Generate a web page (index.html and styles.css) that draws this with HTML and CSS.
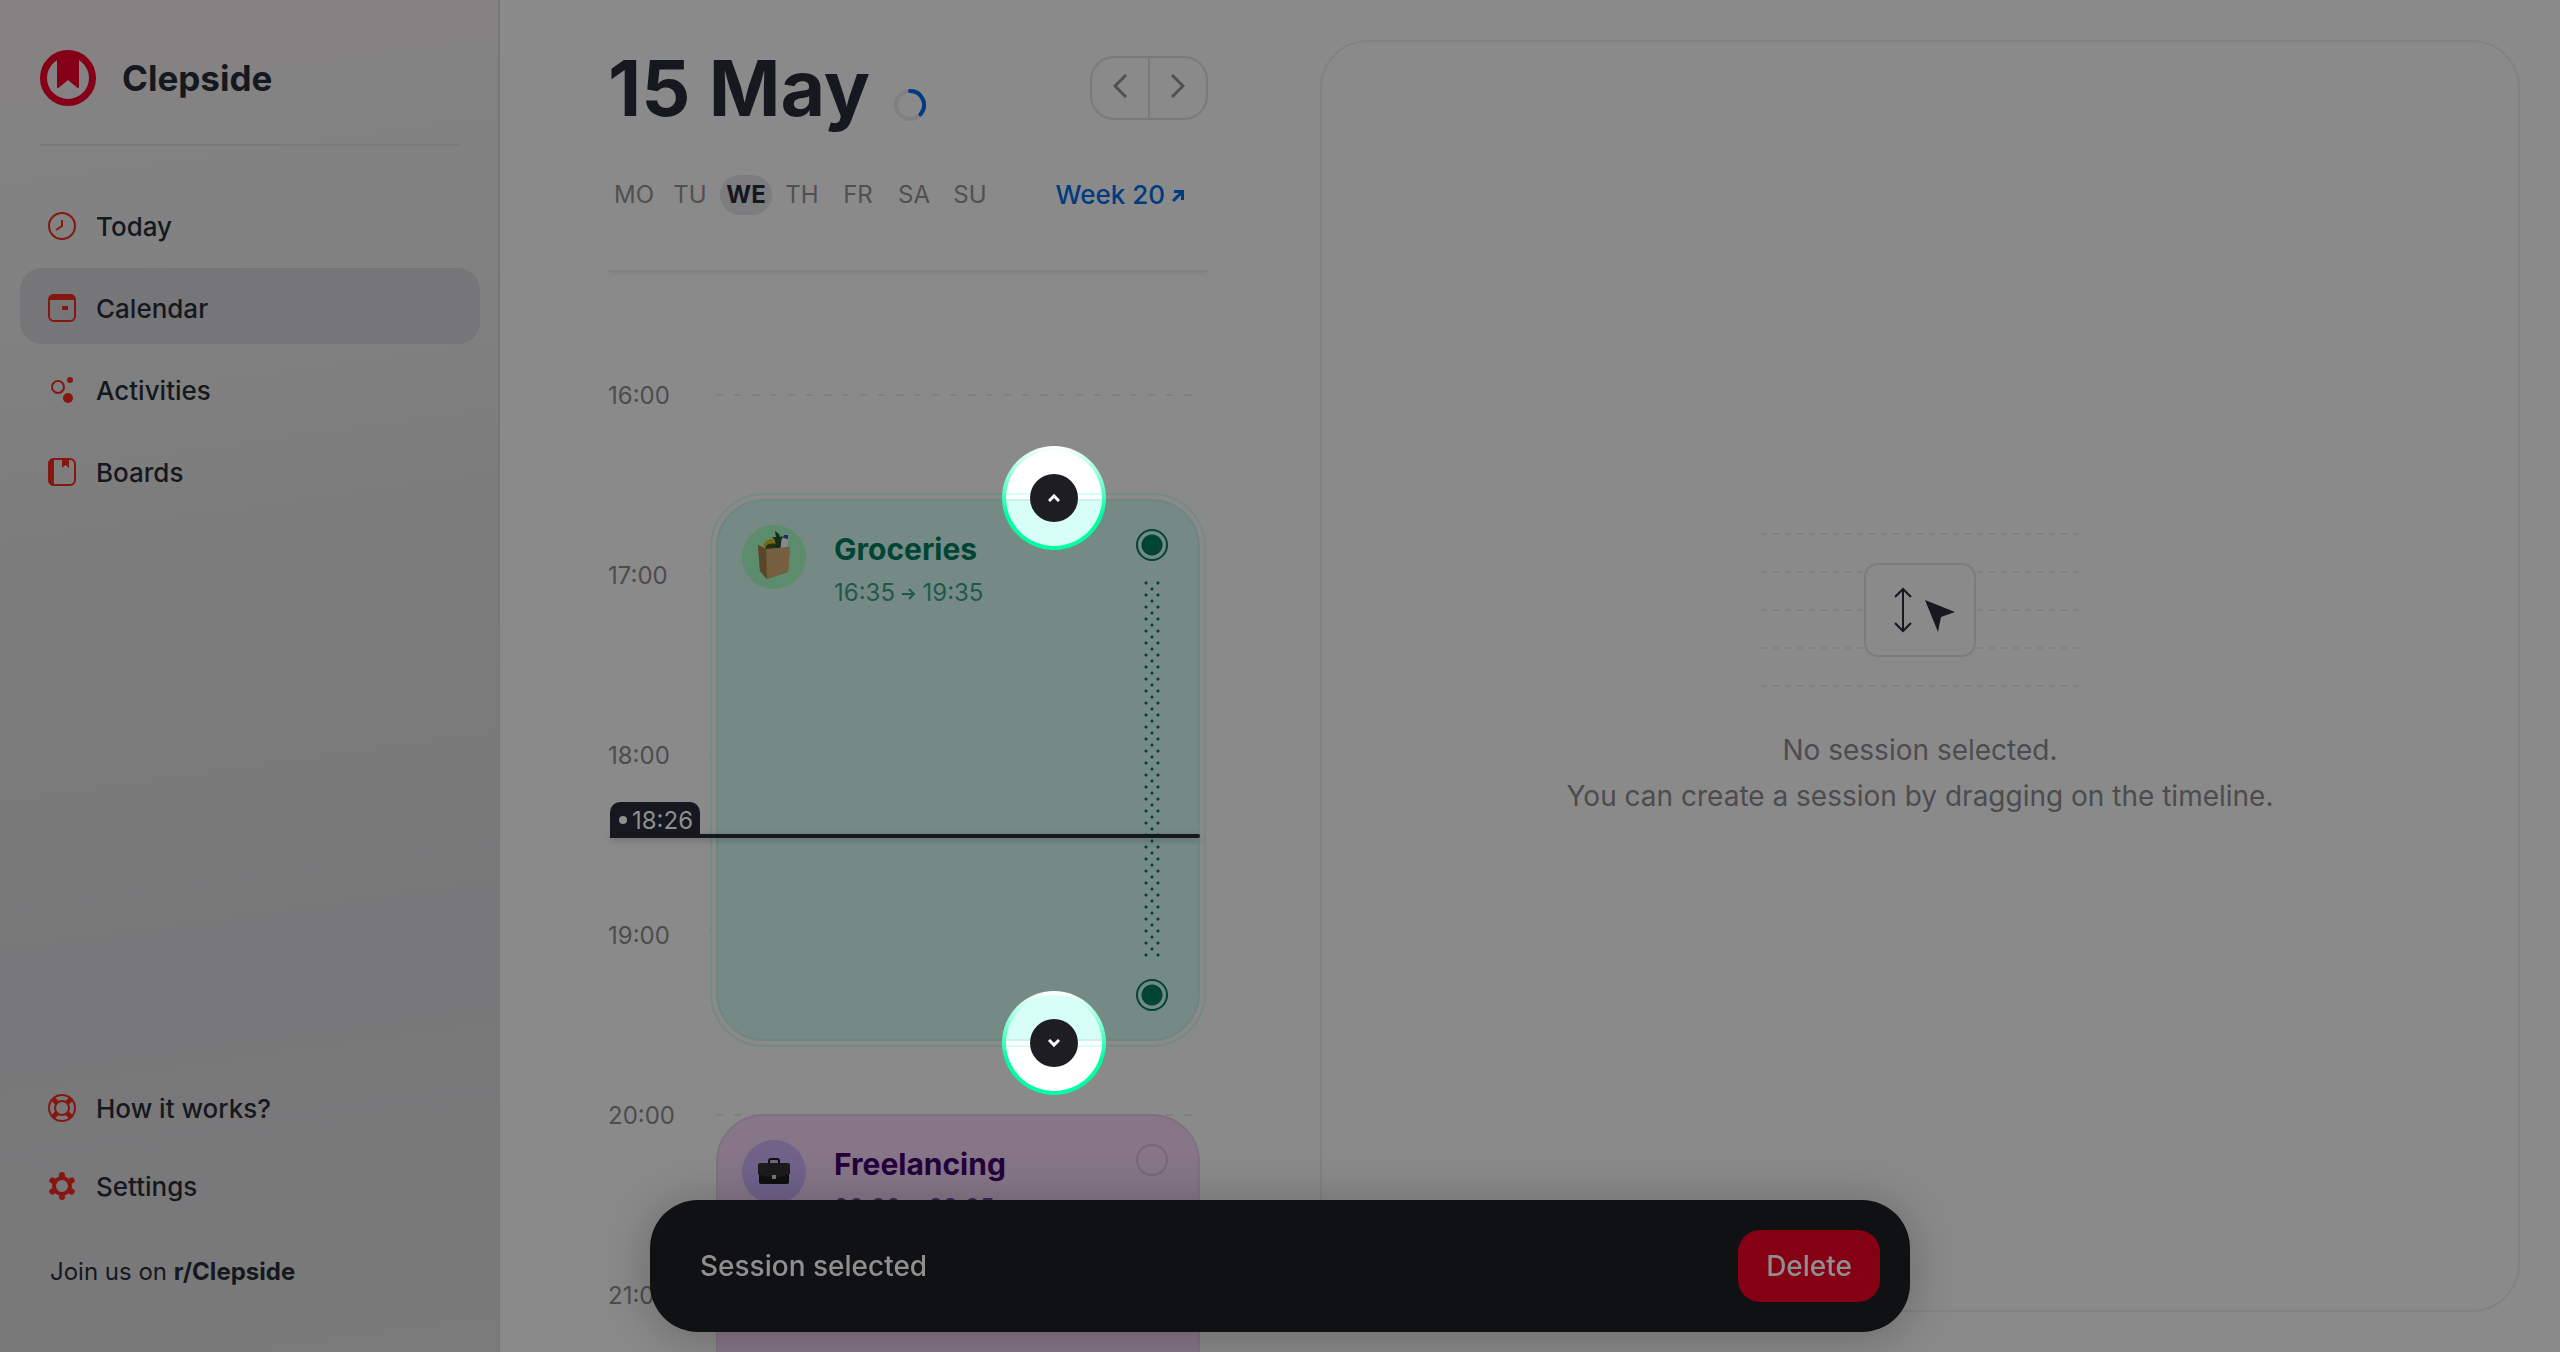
FILE: index.html
```html
<!DOCTYPE html>
<html lang="en">
<head>
<meta charset="utf-8">
<title>Clepside</title>
<link rel="stylesheet" href="styles.css">
</head>
<body>
<div class="app">

<aside class="sidebar">
	<a class="brand" href="#">
		<svg class="logo" viewBox="0 0 56 56"><circle cx="28" cy="28" r="24.5" fill="none" stroke="#850017" stroke-width="7"/><path d="M17 3h22v33.500q0 2.500-2 1l-9-7.500-9 7.500q-2 1.500-2-1z" fill="#850017"/></svg>
		<span>Clepside</span>
	</a>
	<nav class="menu">
		<a class="item" href="#">
			<svg class="icon" viewBox="0 0 28 28"><circle cx="14" cy="14" r="13"/><path d="M14 8v6l-6 4"/></svg>
			Today
		</a>
		<a class="item active" href="#">
			<svg class="icon" viewBox="0 0 28 28"><rect x="1" y="1" width="26" height="26" rx="5"/><path class="solid" d="M0 6a6 6 0 0 1 6-6h16a6 6 0 0 1 6 6zM14 12h6v4h-6z"/></svg>
			Calendar
		</a>
		<a class="item" href="#">
			<svg class="icon" viewBox="0 0 28 28"><circle cx="10" cy="11" r="6"/><circle class="solid" cx="22" cy="4" r="3"/><circle class="solid" cx="20" cy="22" r="5"/></svg>
			Activities
		</a>
		<a class="item" href="#">
			<svg class="icon" viewBox="0 0 28 28"><rect x="1" y="1" width="26" height="26" rx="5"/><path class="solid" d="M6 0v28a6 6 0 0 1-6-6V6a6 6 0 0 1 6-6zM14 1h7v9l-3.500-3-3.500 3z"/></svg>
			Boards
		</a>
	</nav>
	<nav class="menu menu-bottom">
		<a class="item" href="#">
			<svg class="icon" viewBox="0 0 28 28"><circle cx="14" cy="14" r="13"/><circle cx="14" cy="14" r="7"/><path class="thick" d="M5 5l4 4M23 5l-4 4M5 23l4-4M23 23l-4-4"/></svg>
			How it works?
		</a>
		<a class="item" href="#">
			<svg class="icon" viewBox="0 0 28 28"><circle class="cog" cx="14" cy="14" r="8"/><path class="teeth" d="M14 5V3M14 23v2M6.200 9.500l-1.900-1.100M21.800 9.500l1.900-1.100M6.200 18.500l-1.900 1.100M21.800 18.500l1.900 1.100"/></svg>
			Settings
		</a>
	</nav>
	<p class="join">Join us on <a href="#">r/Clepside</a></p>
</aside>

<section class="calendar">
	<header class="day-head">
		<h1>15 May</h1>
		<svg class="spinner" viewBox="0 0 32 32"><circle cx="16" cy="16" r="14"/><path d="M16 2a14 14 0 0 1 10.500 23.300"/></svg>
		<div class="pager">
			<button type="button" aria-label="Previous day"><svg viewBox="0 0 14 24"><path d="M13 1L2 12l11 11"/></svg></button>
			<button type="button" aria-label="Next day"><svg viewBox="0 0 14 24"><path d="M1 1l11 11L1 23"/></svg></button>
		</div>
	</header>
	<div class="week">
		<a href="#">MO</a><a href="#">TU</a><a class="current" href="#">WE</a><a href="#">TH</a><a href="#">FR</a><a href="#">SA</a><a href="#">SU</a>
		<a class="week-link" href="#">Week 20 <svg viewBox="0 0 12 12"><path d="M1 11l9-9M2 1.500h8.500V10"/></svg></a>
	</div>

	<div class="timeline">
		<div class="hour"><span>16:00</span></div>
		<div class="hour"><span>17:00</span></div>
		<div class="hour"><span>18:00</span></div>
		<div class="hour"><span>19:00</span></div>
		<div class="hour"><span>20:00</span></div>
		<div class="hour"><span>21:00</span></div>

		<!-- 3px per minute, the 16:00 line is at 16px -->
		<article class="session groceries" style="top:120px;height:542px">
			<div class="avatar">
				<svg viewBox="0 0 64 64">
					<path d="M21 22c1-6 7-10 14-7l1 9z" fill="#776b13"/>
					<path d="M24 21c3-3 8-3 11-1v5H23z" fill="#242f14"/>
					<path d="M34 24l-1-9-3-3 4 0-1-6 4 3 1 3 3-1-2 5v8z" fill="#152d17"/>
					<path d="M38 24l3-11h4l1 4-2 7z" fill="#8a8792"/>
					<path d="M41 13l1-3h4v4z" fill="#28296e"/>
					<path d="M16 20l8 4 24-2-2 25-21 7-7-8z" fill="#6f5a37"/>
					<path d="M24 24l24-2-2 25-21 7z" fill="#755f3e"/>
					<path d="M16 20l8 4 1 30-7-8z" fill="#5a4527"/>
				</svg>
			</div>
			<div class="info">
				<h2>Groceries</h2>
				<p>16:35 <svg viewBox="0 0 14 14"><path d="M0 7h12M7 2l5 5-5 5"/></svg> 19:35</p>
			</div>
			<div class="track">
				<input type="radio" aria-label="Start" name="start" checked>
				<div class="dots"></div>
				<input type="radio" aria-label="End" name="end" checked>
			</div>
			<div class="spot spot-top"><button type="button" aria-label="Extend up"><svg viewBox="0 0 12 8"><path d="M1 7l5-5 5 5"/></svg></button></div>
			<div class="spot spot-bottom"><button type="button" aria-label="Extend down"><svg viewBox="0 0 12 8"><path d="M1 1l5 5 5-5"/></svg></button></div>
		</article>

		<article class="session freelancing" style="top:735px;height:542px">
			<div class="avatar">
				<svg viewBox="0 0 64 64">
					<path d="M27 24v-3q0-2 2-2h6q2 0 2 2v3" fill="none" stroke="#111" stroke-width="2"/>
					<rect x="17" y="26" width="30" height="18" rx="2" fill="#0f0f10"/>
					<path d="M16 25q0-2 2-2h28q2 0 2 2v9q-16 7-32 0z" fill="#1b1b1c"/>
					<path d="M30 35h4v4h-4z" fill="#77777a"/>
				</svg>
			</div>
			<div class="info">
				<h2>Freelancing</h2>
				<p>20:00 <svg viewBox="0 0 14 14"><path d="M0 7h12M7 2l5 5-5 5"/></svg> 23:05</p>
			</div>
			<div class="track">
				<input type="radio" aria-label="Start" name="next">
			</div>
		</article>

		<div class="now" style="top:455px"><span>18:26</span></div>
	</div>
</section>

<main class="detail">
	<div class="panel">
		<svg class="drag-art" viewBox="0 0 318 154">
			<path class="lines" d="M0 1h318M0 39h318M0 77h318M0 115h318M0 153h318"/>
			<rect x="104" y="31" width="110" height="92" rx="13"/>
			<path class="arrow" d="M142 56v42M134 64l8-8 8 8M134 90l8 8 8-8"/>
			<path class="cursor" d="M164 67l30 12-14 5-3 15z"/>
		</svg>
		<p>No session selected.<br>You can create a session by dragging on the timeline.</p>
	</div>
</main>

</div>

<div class="toast">
	<span>Session selected</span>
	<button type="button">Delete</button>
</div>
</body>
</html>
```
FILE: styles.css
```css
* {
	box-sizing: border-box;
}
body {
	margin: 0;
	background: #8a8a8a;
	color: #15181e;
	font-family: Inter, "Liberation Sans", sans-serif;
	font-size: 26px;
	font-weight: 400;
	overflow: hidden;
}
a {
	color: inherit;
	text-decoration: none;
}
h1, h2, p {
	margin: 0;
}
button {
	border: 0;
	padding: 0;
	background: none;
	color: inherit;
	font: inherit;
}
.app {
	display: grid;
	grid-template-columns: 500px 820px 1fr;
	height: 100vh;
}

/* sidebar */
.sidebar {
	display: flex;
	flex-direction: column;
	padding: 0 18px 64px 20px;
	border-right: 2px solid #77777a;
	background: linear-gradient(172deg, #858283 0%, #828282 20%, #7c7c7c 40%, #78787a 70%, #7a7a7b 100%);
}
.brand {
	display: flex;
	align-items: center;
	gap: 26px;
	height: 146px;
	margin: 0 20px;
	padding-top: 12px;
	border-bottom: 2px solid #7a7a7d;
	font-size: 35px;
	font-weight: 700;
}
.logo {
	width: 56px;
	height: 56px;
}
.menu {
	display: flex;
	flex-direction: column;
	gap: 6px;
	padding-top: 40px;
}
.menu-bottom {
	gap: 2px;
	margin-top: auto;
	padding: 0 0 34px;
}
.item {
	display: flex;
	align-items: center;
	gap: 20px;
	height: 76px;
	padding: 4px 28px 0;
	border-radius: 22px;
	font-weight: 500;
}
.active {
	background: #767678;
}
.icon {
	width: 28px;
	height: 28px;
	fill: none;
	stroke: #861710;
	stroke-width: 2;
}
.icon .solid {
	fill: #861710;
	stroke: none;
}
.icon .thick {
	stroke-width: 5;
}
.icon .cog {
	stroke-width: 4;
}
.icon .teeth {
	stroke-width: 6;
	stroke-linecap: round;
}
.join {
	padding-left: 30px;
	font-size: 24px;
	line-height: 32px;
}
.join a {
	font-weight: 700;
}

/* calendar column */
.calendar {
	height: 100vh;
	padding: 0 112px 0 108px;
	overflow: hidden;
}
.day-head {
	display: flex;
	align-items: center;
	height: 175px;
}
.day-head h1 {
	font-size: 77px;
	font-weight: 700;
	line-height: 96px;
}
.spinner {
	width: 32px;
	height: 32px;
	margin: 34px 0 0 24px;
	fill: none;
	stroke: #808081;
	stroke-width: 4;
}
.spinner path {
	stroke: #003a80;
	stroke-linecap: round;
}
.pager {
	display: flex;
	width: 118px;
	height: 64px;
	margin-left: auto;
	border: 2px solid #7a7a7c;
	border-radius: 24px;
}
.pager button {
	flex: 1;
	padding-top: 2px;
}
.pager button + button {
	border-left: 2px solid #7a7a7c;
}
.pager svg {
	width: 14px;
	height: 24px;
	fill: none;
	stroke: #505052;
	stroke-width: 3;
}
.week {
	display: flex;
	gap: 4px;
	height: 97px;
	border-bottom: 2px solid #818183;
	box-shadow: 0 4px 4px -2px #828283;
	color: #505050;
	font-size: 24px;
	line-height: 40px;
	text-align: center;
}
.week a {
	width: 52px;
	height: 40px;
	border-radius: 20px;
}
.week .current {
	background: #7d7d80;
	color: #15181e;
	font-weight: 700;
}
.week .week-link {
	width: auto;
	margin: 0 24px 0 auto;
	color: #003a80;
	font-size: 26px;
	font-weight: 500;
}
.week-link svg {
	width: 12px;
	height: 12px;
	margin-bottom: 2px;
	fill: none;
	stroke: #003a80;
	stroke-width: 3;
}

/* timeline */
.timeline {
	position: relative;
	margin-top: 107px;
}
.hour {
	display: flex;
	align-items: center;
	justify-content: space-between;
	height: 32px;
	margin: 0 16px 148px 0;
	color: #4c4c4e;
	font-size: 24px;
}
.hour::after {
	content: "";
	width: 488px;
	height: 2px;
	background: repeating-linear-gradient(90deg, #808081 0 1px, transparent 1px 12px, #808081 12px 18px);
}
.session {
	position: absolute;
	left: 108px;
	right: 8px;
	display: flex;
	padding: 24px 30px 24px 24px;
	border: 2px solid;
	border-radius: 48px;
}
.groceries {
	border-color: #6f8680;
	background: #758a85;
	color: #004433;
	outline: 2px solid #758a85;
	outline-offset: 4px;
}
.freelancing {
	border-color: #7f7182;
	background: #867688;
	color: #25003b;
}
.avatar {
	width: 64px;
	height: 64px;
	border-radius: 50%;
	background: #5d8c6d;
}
.freelancing .avatar {
	background: #706289;
}
.info {
	flex: 1;
	padding: 4px 0 0 28px;
}
.info h2 {
	font-size: 30px;
	font-weight: 700;
	line-height: 40px;
}
.info p {
	padding-top: 8px;
	font-size: 24px;
	line-height: 32px;
	opacity: .7;
}
.info svg {
	width: 14px;
	height: 14px;
	fill: none;
	stroke: currentColor;
	stroke-width: 2;
}
.track {
	display: flex;
	flex-direction: column;
	align-items: center;
	gap: 20px;
	padding: 4px 0;
}
.track input {
	appearance: none;
	width: 32px;
	height: 32px;
	margin: 0;
	border: 2px solid #796779;
	border-radius: 50%;
}
.track input:checked {
	border-color: #004433;
	background: radial-gradient(circle, #004433 10px, transparent 11px);
}
.dots {
	flex: 1;
	width: 16px;
	background:
		radial-gradient(circle at 2px 2px, #004433 1px, transparent 2px) 0 0 / 12px 12px,
		radial-gradient(circle at 8px 8px, #004433 1px, transparent 2px) 0 0 / 12px 12px;
}
.spot {
	position: absolute;
	left: 284px;
	display: grid;
	place-items: center;
	width: 104px;
	height: 104px;
	border: 4px solid transparent;
	border-radius: 50%;
}
.spot-top {
	top: -55px;
	background:
		linear-gradient(#fff 43px, #d8fff7 43px 45px, #fff 45px 49px, #c8f3ea 49px 51px, #d8fff7 51px) padding-box,
		linear-gradient(#fff, #00ffa3 65%) border-box;
}
.spot-bottom {
	bottom: -56px;
	background:
		linear-gradient(#d8fff7 44px, #c8f3ea 44px 46px, #fff 46px 50px, #d8fff7 50px 52px, #fff 52px) padding-box,
		linear-gradient(#fff, #00ffa3 65%) border-box;
}
.spot button {
	display: grid;
	place-items: center;
	width: 48px;
	height: 48px;
	border-radius: 50%;
	background: #1d1d22;
}
.spot svg {
	width: 12px;
	height: 8px;
	fill: none;
	stroke: #fff;
	stroke-width: 3;
}
.now {
	position: absolute;
	left: 2px;
	right: 8px;
	height: 4px;
	border-radius: 2px;
	background: #15181e;
	box-shadow: 0 2px 6px rgba(0, 0, 0, .25);
}
.now span {
	position: absolute;
	left: 0;
	bottom: 0;
	display: flex;
	align-items: center;
	gap: 5px;
	height: 36px;
	padding: 0 7px 0 9px;
	border-radius: 10px 10px 0 0;
	background: #15181e;
	color: #8f8f90;
	font-size: 24px;
}
.now span::before {
	content: "";
	width: 8px;
	height: 8px;
	border-radius: 50%;
	background: #8f8f90;
}

/* session detail */
.detail {
	padding: 40px;
	padding-left: 0;
}
.panel {
	display: flex;
	flex-direction: column;
	align-items: center;
	justify-content: center;
	gap: 40px;
	height: 100%;
	border: 2px solid #828283;
	border-radius: 48px;
	color: #4c4c4e;
	font-size: 28px;
	line-height: 46px;
	text-align: center;
}
.drag-art {
	width: 318px;
	height: 154px;
	fill: none;
	stroke: #15181e;
	stroke-width: 2;
}
.drag-art .lines {
	stroke: #808081;
	stroke-dasharray: 6 6;
}
.drag-art rect {
	fill: #8a8a8a;
	stroke: #7c7c7d;
}
.drag-art .cursor {
	fill: #15181e;
	stroke: none;
}

/* selection bar */
.toast {
	position: fixed;
	left: 50%;
	bottom: 20px;
	display: flex;
	align-items: center;
	justify-content: space-between;
	width: 1260px;
	height: 132px;
	margin-left: -630px;
	padding: 0 30px 0 50px;
	border-radius: 48px;
	background: #101113;
	box-shadow: 0 4px 48px rgba(0, 0, 0, .25);
	color: #8f8f90;
	font-size: 28px;
	font-weight: 500;
}
.toast button {
	padding: 0 28px;
	border-radius: 22px;
	background: #850015;
	line-height: 72px;
}
```
